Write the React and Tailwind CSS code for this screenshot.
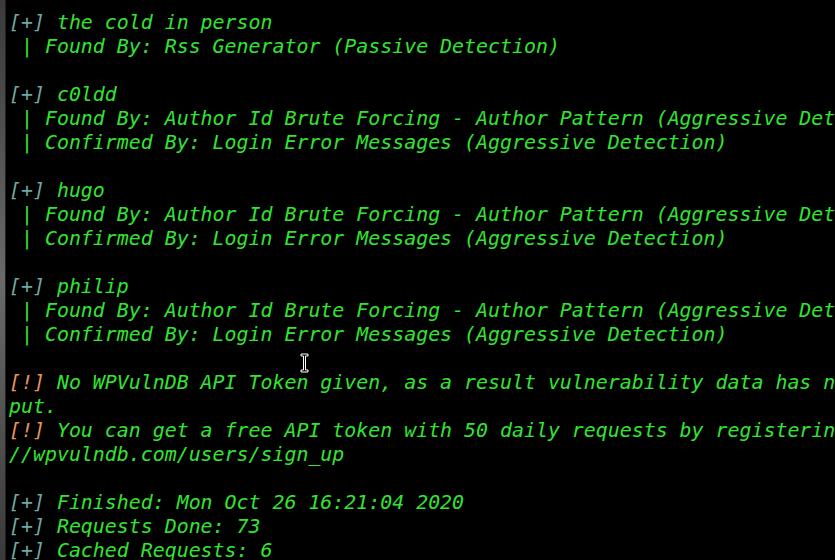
import React from "react";

const G = "text-[#33e433]";
const B = "text-[#6fa9a3]";
const O = "text-[#e8955a]";

const lines = [
  [["[+]", B], [" the cold in person", G]],
  [[" | Found By: Rss Generator (Passive Detection)", G]],
  [],
  [["[+]", B], [" c0ldd", G]],
  [[" | Found By: Author Id Brute Forcing - Author Pattern (Aggressive Detection)", G]],
  [[" | Confirmed By: Login Error Messages (Aggressive Detection)", G]],
  [],
  [["[+]", B], [" hugo", G]],
  [[" | Found By: Author Id Brute Forcing - Author Pattern (Aggressive Detection)", G]],
  [[" | Confirmed By: Login Error Messages (Aggressive Detection)", G]],
  [],
  [["[+]", B], [" philip", G]],
  [[" | Found By: Author Id Brute Forcing - Author Pattern (Aggressive Detection)", G]],
  [[" | Confirmed By: Login Error Messages (Aggressive Detection)", G]],
  [],
  [["[!]", O], [" No WPVulnDB API Token given, as a result vulnerability data has not been out", G]],
  [["put.", G]],
  [["[!]", O], [" You can get a free API token with 50 daily requests by registering at https:", G]],
  [["//wpvulndb.com/users/sign_up", G]],
  [],
  [["[+]", B], [" Finished: Mon Oct 26 16:21:04 2020", G]],
  [["[+]", B], [" Requests Done: 73", G]],
  [["[+]", B], [" Cached Requests: 6", G]],
];

export default function App() {
  return (
    <div className="w-[835px] h-[560px] bg-black flex overflow-hidden relative">
      <div className="w-[6px] h-full bg-gradient-to-b from-[#3a3a3a] via-[#6a6a6a] to-[#3a3a3a] border-r border-[#222]" />
      <div
        className="flex-1 pl-[3px] pt-[11px] italic text-[19.9px] leading-[24px] whitespace-pre overflow-hidden"
        style={{ fontFamily: '"DejaVu Sans Mono", monospace' }}
      >
        {lines.map((l, i) => (
          <div key={i} className="h-[24px]">
            {l.map(([t, c], j) => (
              <span key={j} className={c}>
                {t}
              </span>
            ))}
          </div>
        ))}
      </div>
      <svg
        className="absolute left-[300px] top-[353px]"
        width="9"
        height="20"
        viewBox="0 0 9 20"
      >
        <path
          d="M1 1 H8 V3 H5.5 V17 H8 V19 H1 V17 H3.5 V3 H1 Z"
          fill="black"
          stroke="white"
          strokeWidth="1"
        />
      </svg>
    </div>
  );
}
